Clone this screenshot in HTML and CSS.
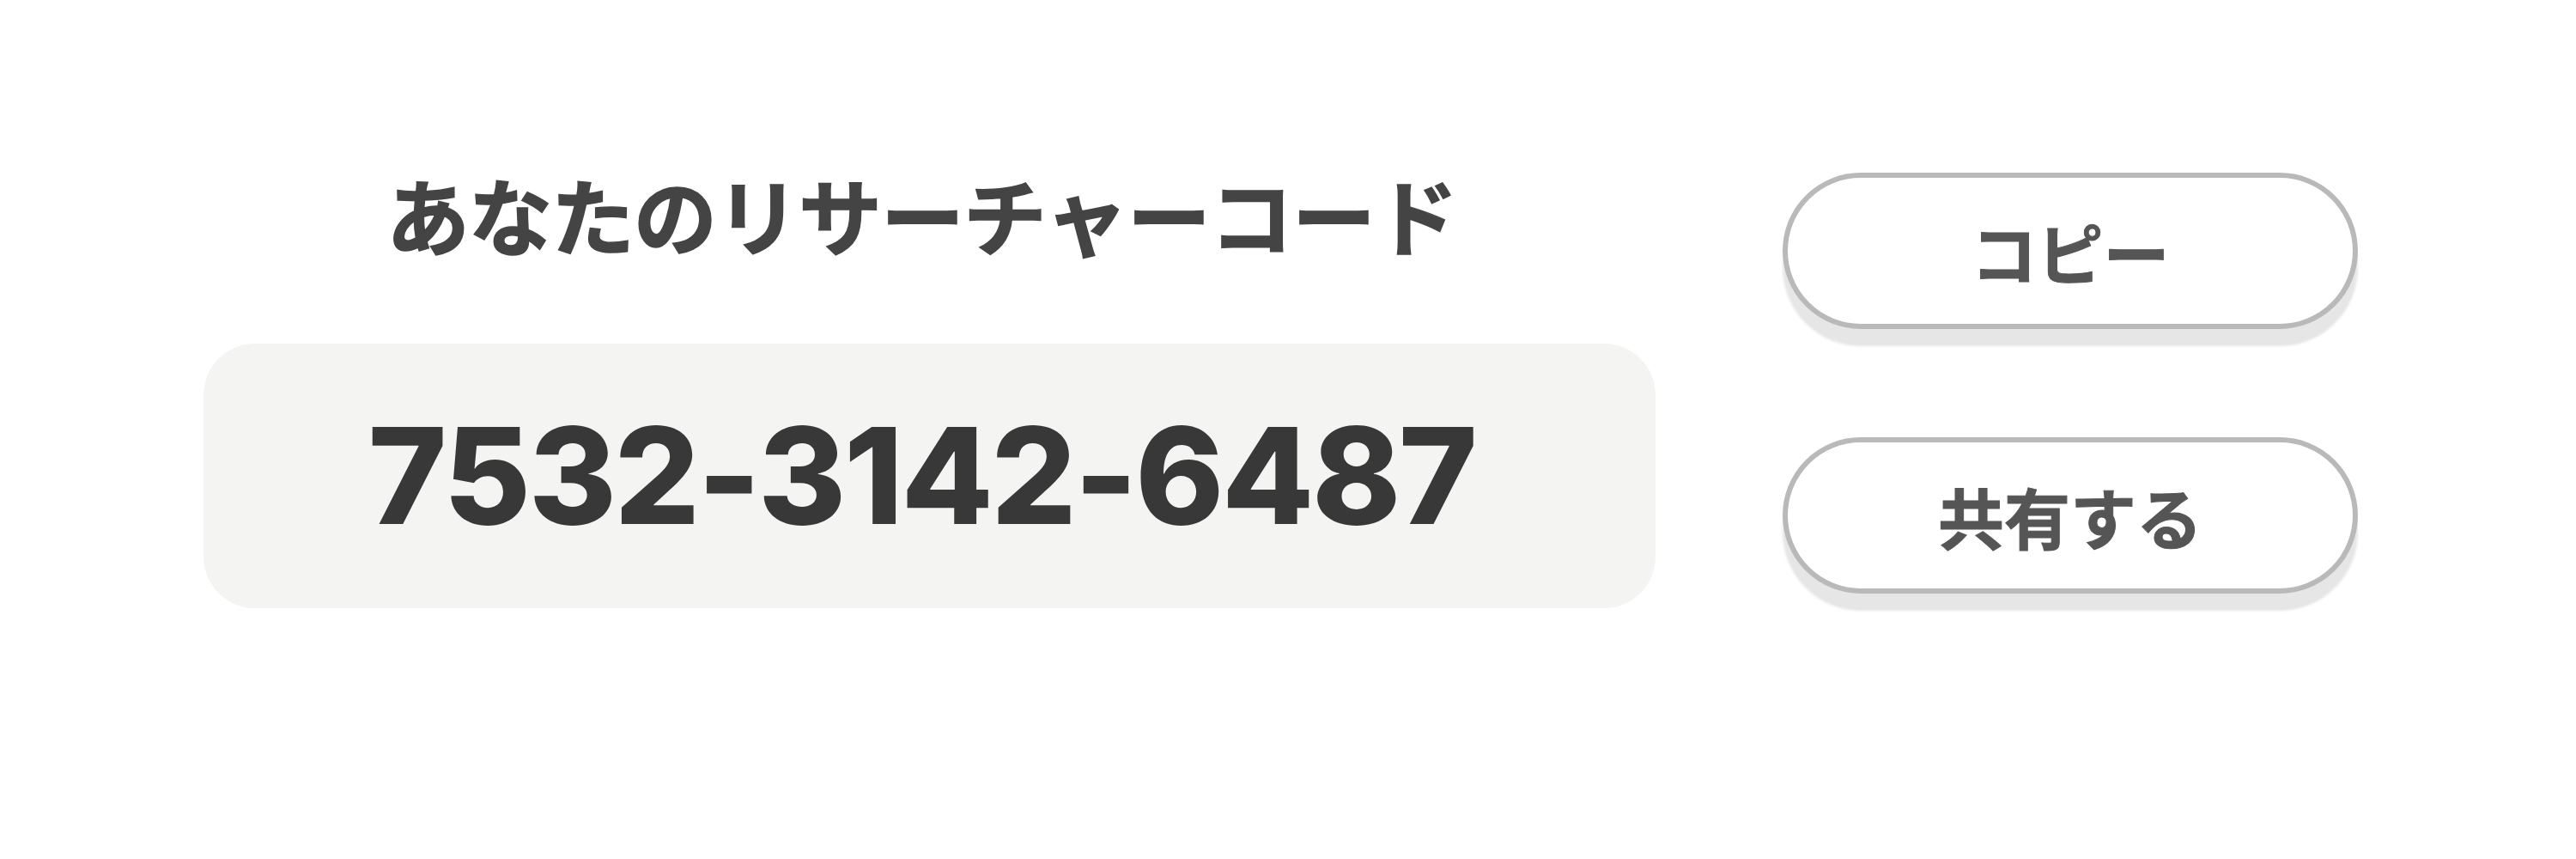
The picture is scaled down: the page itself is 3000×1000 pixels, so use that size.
FILE: index.html
```html
<!DOCTYPE html>
<html lang="ja">
<head>
<meta charset="utf-8">
<title>リサーチャーコード</title>
<link rel="stylesheet" href="styles.css">
</head>
<body>
<main class="page">
  <section class="code-col">
    <h1 class="title">あなたのリサーチャーコード</h1>
    <div class="code-box">
      <span class="code">7532-3142-6487</span>
    </div>
  </section>
  <section class="actions">
    <button class="btn" type="button">コピー</button>
    <button class="btn" type="button">共有する</button>
  </section>
</main>
</body>
</html>
```

FILE: styles.css
```css
html, body {
  margin: 0;
  padding: 0;
  background: #ffffff;
}

body {
  font-family: "Noto Sans CJK JP", "Noto Sans", sans-serif;
  width: 3000px;
  height: 1000px;
  overflow: hidden;
}

.page {
  display: flex;
  align-items: flex-start;
  gap: 148px;
  padding: 200px 0 0 237px;
}

.code-col {
  display: flex;
  flex-direction: column;
  align-items: center;
  width: 1691px;
}

.title {
  margin: 0 0 104px 0;
  font-size: 97px;
  line-height: 96px;
  font-weight: 700;
  color: #444444;
  -webkit-text-stroke: 1.5px #444444;
  letter-spacing: -1px;
  padding-right: 18px;
}

.code-box {
  box-sizing: border-box;
  width: 1691px;
  height: 308px;
  background: #f4f4f3;
  border-radius: 60px;
  display: flex;
  align-items: center;
  justify-content: center;
}

.code {
  font-family: "Inter", "Noto Sans", sans-serif;
  font-size: 156px;
  line-height: 1;
  font-weight: 800;
  color: #383838;
  letter-spacing: -2.5px;
  padding: 0 18px 0 0;
}

.actions {
  display: flex;
  flex-direction: column;
  gap: 126px;
  padding-top: 1px;
}

.btn {
  box-sizing: border-box;
  width: 670px;
  height: 182px;
  border: 6px solid #b9b9b9;
  border-radius: 91px;
  background: #ffffff;
  box-shadow: 0 20px 3px #e6e6e6;
  font-family: "Noto Sans CJK JP", "Noto Sans", sans-serif;
  font-size: 77px;
  font-weight: 700;
  color: #555555;
  -webkit-text-stroke: 1px #555555;
  line-height: 1;
  padding: 0;
  cursor: pointer;
}
```
